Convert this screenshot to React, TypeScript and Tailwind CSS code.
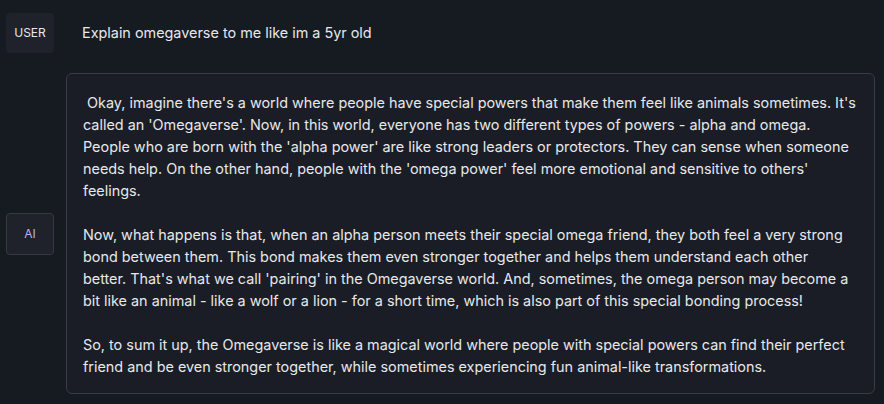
import React from "react";

const p1 =
  " Okay, imagine there's a world where people have special powers that make them feel like animals sometimes. It's called an 'Omegaverse'. Now, in this world, everyone has two different types of powers - alpha and omega. People who are born with the 'alpha power' are like strong leaders or protectors. They can sense when someone needs help. On the other hand, people with the 'omega power' feel more emotional and sensitive to others' feelings.";
const p2a =
  "Now, what happens is that, when an alpha person meets their special omega friend, they both feel a very strong bond between them. This bond makes them even stronger together and helps them understand each other";
const p2b =
  "better. That's what we call 'pairing' in the Omegaverse world. And, sometimes, the omega person may become a bit like an animal - like a wolf or a lion - for a short time, which is also part of this special bonding process!";
const p3 =
  "So, to sum it up, the Omegaverse is like a magical world where people with special powers can find their perfect friend and be even stronger together, while sometimes experiencing fun animal-like transformations.";

export default function App() {
  return (
    <div
      className="min-h-[404px] w-full bg-[#161a21] text-[#e6e8ec] pl-[6px] pr-[9px] pt-[13px]"
      style={{ fontFamily: "Inter, 'Noto Sans', sans-serif" }}
    >
      <div className="flex items-center gap-3">
        <div className="w-12 h-10 shrink-0 rounded-[4px] bg-[#1f212b] flex items-center justify-center text-[12px] text-[#e6e8ec]">
          USER
        </div>
        <div className="px-4 text-[14.4px] leading-[22px]">Explain omegaverse to me like im a 5yr old</div>
      </div>
      <div className="flex items-center gap-3 mt-5">
        <div className="w-12 h-[42px] shrink-0 rounded-[4px] bg-[#1f212b] border border-[#363846] flex items-center justify-center text-[12px] text-[#b9b0f2]">
          AI
        </div>
        <div className="flex-1 rounded-[6px] border border-[#393b48] bg-[#1a1d25] pl-4 pr-[18px] pt-[18px] pb-[15px] text-[14.4px] leading-[22px] whitespace-pre-wrap">
          <p>{p1}</p>
          <p className="mt-[22px]">
            {p2a}
            <br />
            {p2b}
          </p>
          <p className="mt-[22px]">{p3}</p>
        </div>
      </div>
    </div>
  );
}
